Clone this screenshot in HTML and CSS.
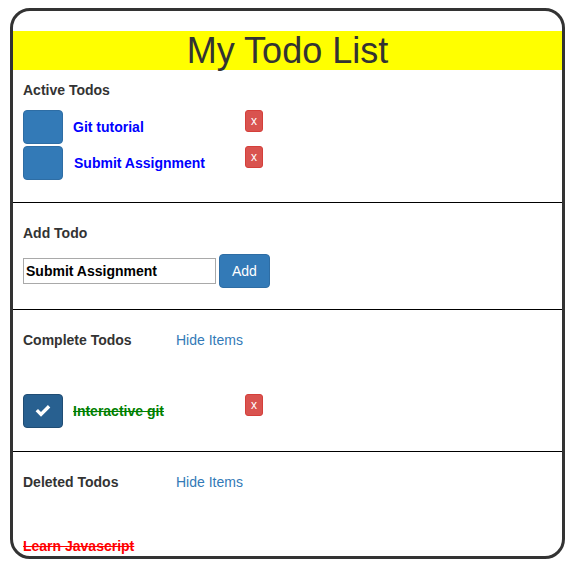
FILE: index.html
```html
<!DOCTYPE html>
<html>
<head>
<meta charset="utf-8">
<title>My Todo List</title>
<link rel="stylesheet" href="styles.css">
</head>
<body>
<div class="app">
  <h1 class="title">My Todo List</h1>

  <section class="section section-active">
    <div class="label">Active Todos</div>
    <div class="items">
      <div class="item">
        <button class="check"></button>
        <span class="todo todo-active">Git tutorial</span>
        <button class="del">x</button>
      </div>
      <div class="item">
        <button class="check"></button>
        <span class="todo todo-active todo-shift">Submit Assignment</span>
        <button class="del">x</button>
      </div>
    </div>
  </section>

  <section class="section section-add">
    <div class="label">Add Todo</div>
    <div class="add-row">
      <input class="add-input" type="text" value="Submit Assignment">
      <button class="add-btn">Add</button>
    </div>
  </section>

  <section class="section section-complete">
    <div class="head">
      <span class="label">Complete Todos</span>
      <a class="hide" href="#">Hide Items</a>
    </div>
    <div class="items items-spaced">
      <div class="item">
        <button class="check check-on"><svg width="16" height="12" viewBox="0 0 16 12"><path d="M0.6 6.3 L3 3.9 L6 6.9 L12.9 0 L15.3 2.4 L6 11.7 Z" fill="#fff"/></svg></button>
        <span class="todo todo-done">Interactive git</span>
        <button class="del">x</button>
      </div>
    </div>
  </section>

  <section class="section section-deleted">
    <div class="head">
      <span class="label">Deleted Todos</span>
      <a class="hide" href="#">Hide Items</a>
    </div>
    <div class="deleted-list">
      <div class="todo todo-deleted">Learn Javascript</div>
    </div>
  </section>
</div>
</body>
</html>
```

FILE: styles.css
```css
html, body {
  margin: 0;
  padding: 0;
  background: #fff;
}

body {
  font-family: "Liberation Sans", Arial, Helvetica, sans-serif;
  font-size: 14px;
  line-height: 20px;
  color: #333;
}

.app {
  box-sizing: border-box;
  margin: 8px 0 0 10px;
  width: 555px;
  height: 551px;
  border: 3px solid #333;
  border-radius: 20px;
  overflow: hidden;
}

.title {
  margin: 20px 0 10px;
  background: #ffff00;
  font-size: 36px;
  font-weight: normal;
  line-height: 39px;
  text-align: center;
  color: #333;
}

.section {
  padding: 0 10px;
  border-bottom: 1px solid #000;
}

.section-active {
  padding-bottom: 22px;
}

.section-add {
  padding-top: 20px;
  padding-bottom: 21px;
}

.section-complete {
  padding-top: 20px;
  padding-bottom: 23px;
}

.section-deleted {
  padding-top: 20px;
  border-bottom: none;
}

.label {
  font-weight: bold;
  display: block;
}

.head {
  display: grid;
  grid-template-columns: 153px auto;
  justify-content: start;
}

.hide {
  color: #337ab7;
  text-decoration: none;
}

.items {
  margin-top: 10px;
  display: flex;
  flex-direction: column;
  gap: 2px;
}

.items-spaced {
  margin-top: 44px;
}

.item {
  display: grid;
  grid-template-columns: 40px 172px auto;
  column-gap: 10px;
  align-items: center;
  justify-content: start;
  height: 34px;
}

.check {
  box-sizing: border-box;
  width: 40px;
  height: 34px;
  padding: 0;
  margin: 0;
  background: #337ab7;
  border: 1px solid #2e6da4;
  border-radius: 4px;
  display: flex;
  align-items: center;
  justify-content: center;
}

.check-on {
  background: #286090;
  border-color: #204d74;
}

.check-on svg {
  display: block;
  margin-top: -1px;
}

.todo {
  font-weight: bold;
}

.todo-active {
  color: #0000ff;
}

.todo-shift {
  padding-left: 1px;
}

.todo-done {
  color: #008000;
  text-decoration: line-through;
}

.todo-deleted {
  color: #ff0000;
  text-decoration: line-through;
}

.del {
  align-self: start;
  box-sizing: border-box;
  height: 22px;
  margin: 0 0 0 -10px;
  padding: 1px 5px;
  font-family: "Liberation Sans", Arial, sans-serif;
  font-size: 12px;
  line-height: 18px;
  color: #fff;
  background: #d9534f;
  border: 1px solid #d43f3a;
  border-radius: 3px;
}

.add-row {
  margin-top: 11px;
  display: flex;
  align-items: center;
  gap: 3px;
}

.add-input {
  box-sizing: border-box;
  width: 193px;
  height: 26px;
  margin: 0;
  padding: 1px 2px;
  border: 1px solid #a9a9a9;
  font-family: "Liberation Sans", Arial, sans-serif;
  font-size: 14px;
  font-weight: bold;
  color: #000;
}

.add-btn {
  box-sizing: border-box;
  height: 34px;
  margin: 0;
  padding: 6px 12px;
  font-family: "Liberation Sans", Arial, sans-serif;
  font-size: 14px;
  line-height: 20px;
  color: #fff;
  background: #337ab7;
  border: 1px solid #2e6da4;
  border-radius: 4px;
}

.deleted-list {
  margin-top: 44px;
}
```
